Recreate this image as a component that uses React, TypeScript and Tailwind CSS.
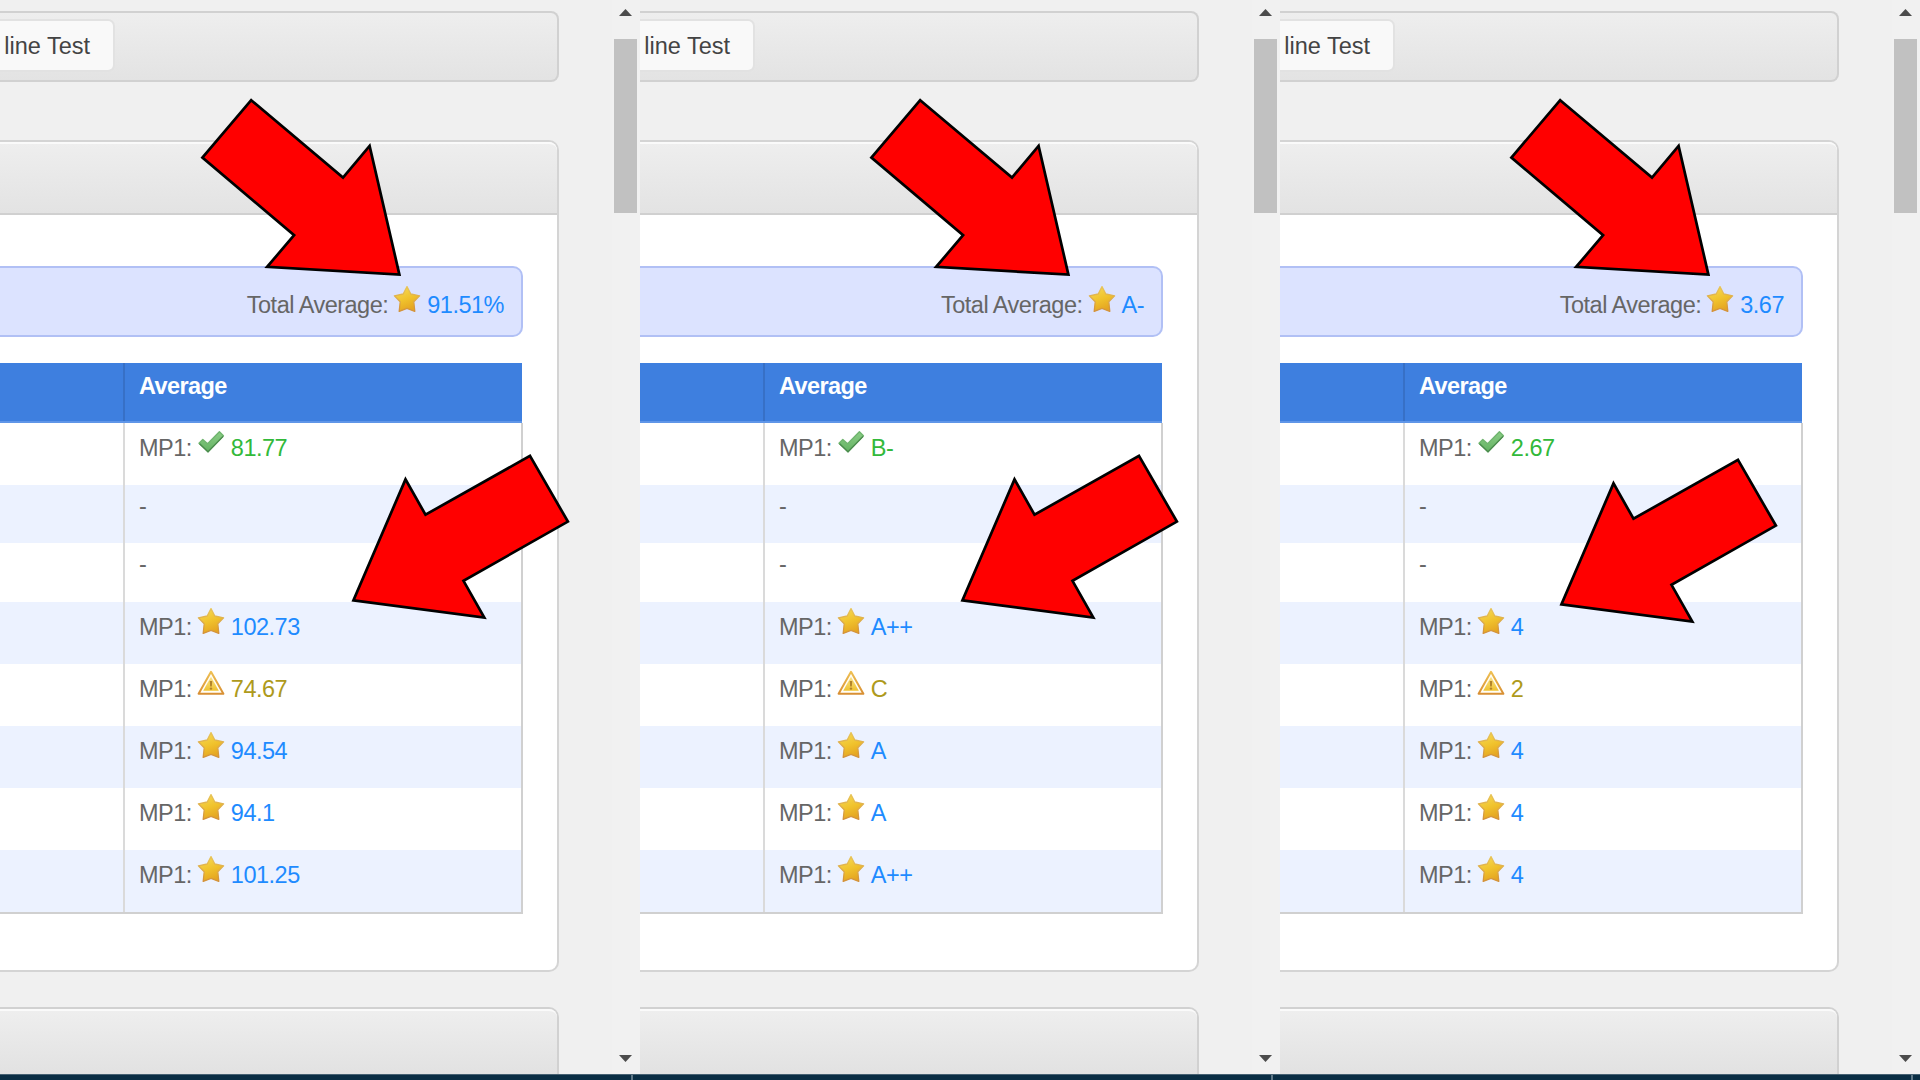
type Kind = "check" | "star" | "warn";
type Point = [number, number];

interface PaneData {
  total: string;
  values: string[];
  topArrow: Point;
  rowArrow: Point;
}

const kinds: (Kind | null)[] = ["check", null, null, "star", "warn", "star", "star", "star"];
const rowHeights = [
  "h-[62px]",
  "h-[58px]",
  "h-[59px]",
  "h-[62px]",
  "h-[62px]",
  "h-[62px]",
  "h-[62px]",
  "h-[62px]",
];

const panes: PaneData[] = [
  {
    total: "91.51%",
    values: ["81.77", "-", "-", "102.73", "74.67", "94.54", "94.1", "101.25"],
    topArrow: [-29, 0],
    rowArrow: [31, 0],
  },
  {
    total: "A-",
    values: ["B-", "-", "-", "A++", "C", "A", "A", "A++"],
    topArrow: [0, 0],
    rowArrow: [0, 0],
  },
  {
    total: "3.67",
    values: ["2.67", "-", "-", "4", "2", "4", "4", "4"],
    topArrow: [0, 0],
    rowArrow: [-41, 4],
  },
];

const valueColors: Record<Kind, string> = {
  check: "text-[#32b93a]",
  star: "text-[#1e8bff]",
  warn: "text-[#ae9a1c]",
};

function StatusIcon({ kind }: { kind: Kind }) {
  if (kind === "check") {
    return (
      <svg className="h-7 w-7" viewBox="0 -2 28 28">
        <path
          d="M2 13.2 5.8 9.6 10.6 13.8 22.4 1.8 26.4 5.8 11 21.8Z"
          fill="url(#checkFill)"
          stroke="#6fb56e"
          strokeWidth="1.4"
          strokeLinejoin="round"
        />
        <path d="M2.6 13.8 11 21.8 26.2 6.4" fill="none" stroke="#4a8b4c" strokeWidth="1.3" />
      </svg>
    );
  }
  if (kind === "warn") {
    return (
      <svg className="h-7 w-7" viewBox="0 0 28 28">
        <path
          d="M14 2.8 26.4 24.8H1.6Z"
          fill="#fffdf4"
          stroke="url(#warnStroke)"
          strokeWidth="2"
          strokeLinejoin="round"
        />
        <path d="M14 7.8 21.8 21.8H6.2Z" fill="url(#warnFill)" />
        <path d="M12.7 12h2.6l-.5 5.4h-1.6Z" fill="#b3842a" />
        <circle cx="14" cy="19.6" r="1.2" fill="#b3842a" />
      </svg>
    );
  }
  return (
    <svg className="h-7 w-7" viewBox="0 0 28 28">
      <path
        d="M14 1.6 17.8 9 26.6 10.8 20.8 16.8 21.8 26.4 14 23.4 6.2 26.4 7.2 16.8 1.4 10.8 10.2 9Z"
        fill="url(#starFill)"
        stroke="url(#starStroke)"
        strokeWidth="1.3"
        strokeLinejoin="round"
      />
    </svg>
  );
}

function Graded({ label, kind, value }: { label: string; kind: Kind; value: string }) {
  return (
    <div className="flex whitespace-nowrap">
      <span>{label}</span>
      <span className="-mt-2 ml-[5px] h-7 w-7 shrink-0">
        <StatusIcon kind={kind} />
      </span>
      <span className={`ml-[6px] ${valueColors[kind]}`}>{value}</span>
    </div>
  );
}

const TOP_ARROW = "280.4,100.6 372.2,178 398.8,146.3 428.6,275 296.3,267.3 323.3,235.6 231.6,158";
const ROW_ARROW = "499.2,456.3 537.1,522 432.7,581.2 453.5,618 322.6,600.8 374.7,479.8 394.7,515.1";

function Arrow({ points, shift }: { points: string; shift: Point }) {
  return (
    <polygon
      points={points}
      transform={`translate(${shift[0] - 0.2} ${shift[1] - 0.4})`}
      fill="#ff0000"
      stroke="#000"
      strokeWidth="2.7"
    />
  );
}

function Pane({ data }: { data: PaneData }) {
  return (
    <section className="relative flex h-[1080px] w-[640px] flex-col overflow-hidden bg-[#f0f0f0]">
      <div className="flex h-[1074px] overflow-hidden">
        <main className="flex w-[559px] shrink-0 flex-col pt-[11px]">
          <nav className="flex h-[71px] shrink-0 rounded-r-[8px] border-y-2 border-r-2 border-[#d1d1d1] bg-linear-to-b from-[#eeeeee] to-[#e3e3e3] pt-[6px]">
            <div className="flex h-[53px] w-[115px] items-center justify-end rounded-r-[7px] border-y-2 border-r-2 border-[#e2e2e2] bg-[#f9f9f9] pt-[2px] pr-[23px] tracking-normal whitespace-nowrap text-[#444]">
              line Test
            </div>
          </nav>

          <div className="mt-[58px] flex h-[832px] shrink-0 flex-col overflow-hidden rounded-r-[10px] border-y-2 border-r-2 border-[#d4d4d4] bg-white">
            <div className="h-[73px] shrink-0 rounded-tr-[8px] border-t-2 border-b-2 border-t-[#fafafa] border-b-[#d0d0d0] bg-linear-to-b from-[#eeeeee] to-[#e3e3e3]" />
            <div className="mt-[51px] flex h-[71px] w-[523px] shrink-0 justify-end rounded-r-[10px] border-y-2 border-r-2 border-[#b1c0f5] bg-[#dce3ff] pt-[25px] pr-[17px]">
              <Graded label="Total Average:" kind="star" value={data.total} />
            </div>
            <div className="mt-[26px] w-[523px] shrink-0">
              <div className="flex h-[60px] w-[522px] border-b-2 border-[#5f96e8] bg-[#3e7fdf]">
                <div className="w-[125px] border-r-2 border-[#3770c6]" />
                <div className="pt-[11px] pl-[14px] font-bold tracking-[-0.6px] text-white">Average</div>
              </div>
              <div className="border-r-2 border-b-2 border-[#d0d0d0]">
                {data.values.map((value, i) => {
                  const kind = kinds[i];
                  return (
                    <div key={i} className={`flex ${rowHeights[i]} ${i % 2 ? "bg-[#ecf2ff]" : "bg-white"}`}>
                      <div className="w-[125px] border-r-2 border-[#dadada]" />
                      <div className={kind ? "pt-[13px] pl-[14px]" : "pt-[9px] pl-[14px]"}>
                        {kind ? <Graded label="MP1:" kind={kind} value={value} /> : value}
                      </div>
                    </div>
                  );
                })}
              </div>
            </div>
          </div>

          <div className="mt-[35px] h-[100px] shrink-0 rounded-tr-[10px] border-t-2 border-r-2 border-[#d1d1d1] bg-[#eee]">
            <div className="h-full rounded-tr-[8px] border-t-2 border-[#fafafa] bg-linear-to-b from-[#eeeeee] to-[#e1e1e1] to-70%" />
          </div>
        </main>

        <div className="ml-[53px] flex w-[28px] flex-col items-center bg-[#f1f1f1] pt-[9px] pr-[1px]">
          <svg className="h-[7px] w-[13px]" viewBox="0 0 13 7">
            <path d="M0 7 6.5 0 13 7Z" fill="#4c4c4c" />
          </svg>
          <div className="mt-[23px] h-[174px] w-[23px] bg-[#c1c1c1]" />
          <svg className="mt-auto mb-[12px] h-[7px] w-[13px]" viewBox="0 0 13 7">
            <path d="M0 0 6.5 7 13 0Z" fill="#4c4c4c" />
          </svg>
        </div>
      </div>
      <footer className="flex h-[6px] border-t border-[#476172] bg-[#0a2e44] pl-[631px]">
        <div className="w-[2px] bg-[#5d7686]" />
      </footer>

      <svg className="absolute inset-0 h-[1080px] w-[640px]" viewBox="0 0 640 1080">
        <Arrow points={TOP_ARROW} shift={data.topArrow} />
        <Arrow points={ROW_ARROW} shift={data.rowArrow} />
      </svg>
    </section>
  );
}

export default function App() {
  return (
    <div className="flex h-[1080px] w-[1920px] overflow-hidden bg-[#f0f0f0] font-['Liberation_Sans',Arial,sans-serif] text-[23.5px] leading-[25px] tracking-[-0.5px] text-[#666]">
      <svg className="absolute h-0 w-0">
        <defs>
          <linearGradient id="starFill" x1="0" y1="0" x2="0.4" y2="1">
            <stop offset="0" stopColor="#f6dc5c" />
            <stop offset="0.6" stopColor="#f0c22c" />
            <stop offset="1" stopColor="#e5a622" />
          </linearGradient>
          <linearGradient id="starStroke" x1="0" y1="0" x2="0" y2="1">
            <stop offset="0" stopColor="#e8c65a" />
            <stop offset="1" stopColor="#d3913a" />
          </linearGradient>
          <linearGradient id="checkFill" x1="0" y1="0" x2="0" y2="1">
            <stop offset="0" stopColor="#8ccd86" />
            <stop offset="1" stopColor="#62b262" />
          </linearGradient>
          <linearGradient id="warnStroke" x1="0" y1="0" x2="0" y2="1">
            <stop offset="0" stopColor="#efc052" />
            <stop offset="1" stopColor="#d88f34" />
          </linearGradient>
          <linearGradient id="warnFill" x1="0" y1="0" x2="0" y2="1">
            <stop offset="0" stopColor="#fbe48e" />
            <stop offset="1" stopColor="#efc22f" />
          </linearGradient>
        </defs>
      </svg>
      {panes.map((data) => (
        <Pane key={data.total} data={data} />
      ))}
    </div>
  );
}
